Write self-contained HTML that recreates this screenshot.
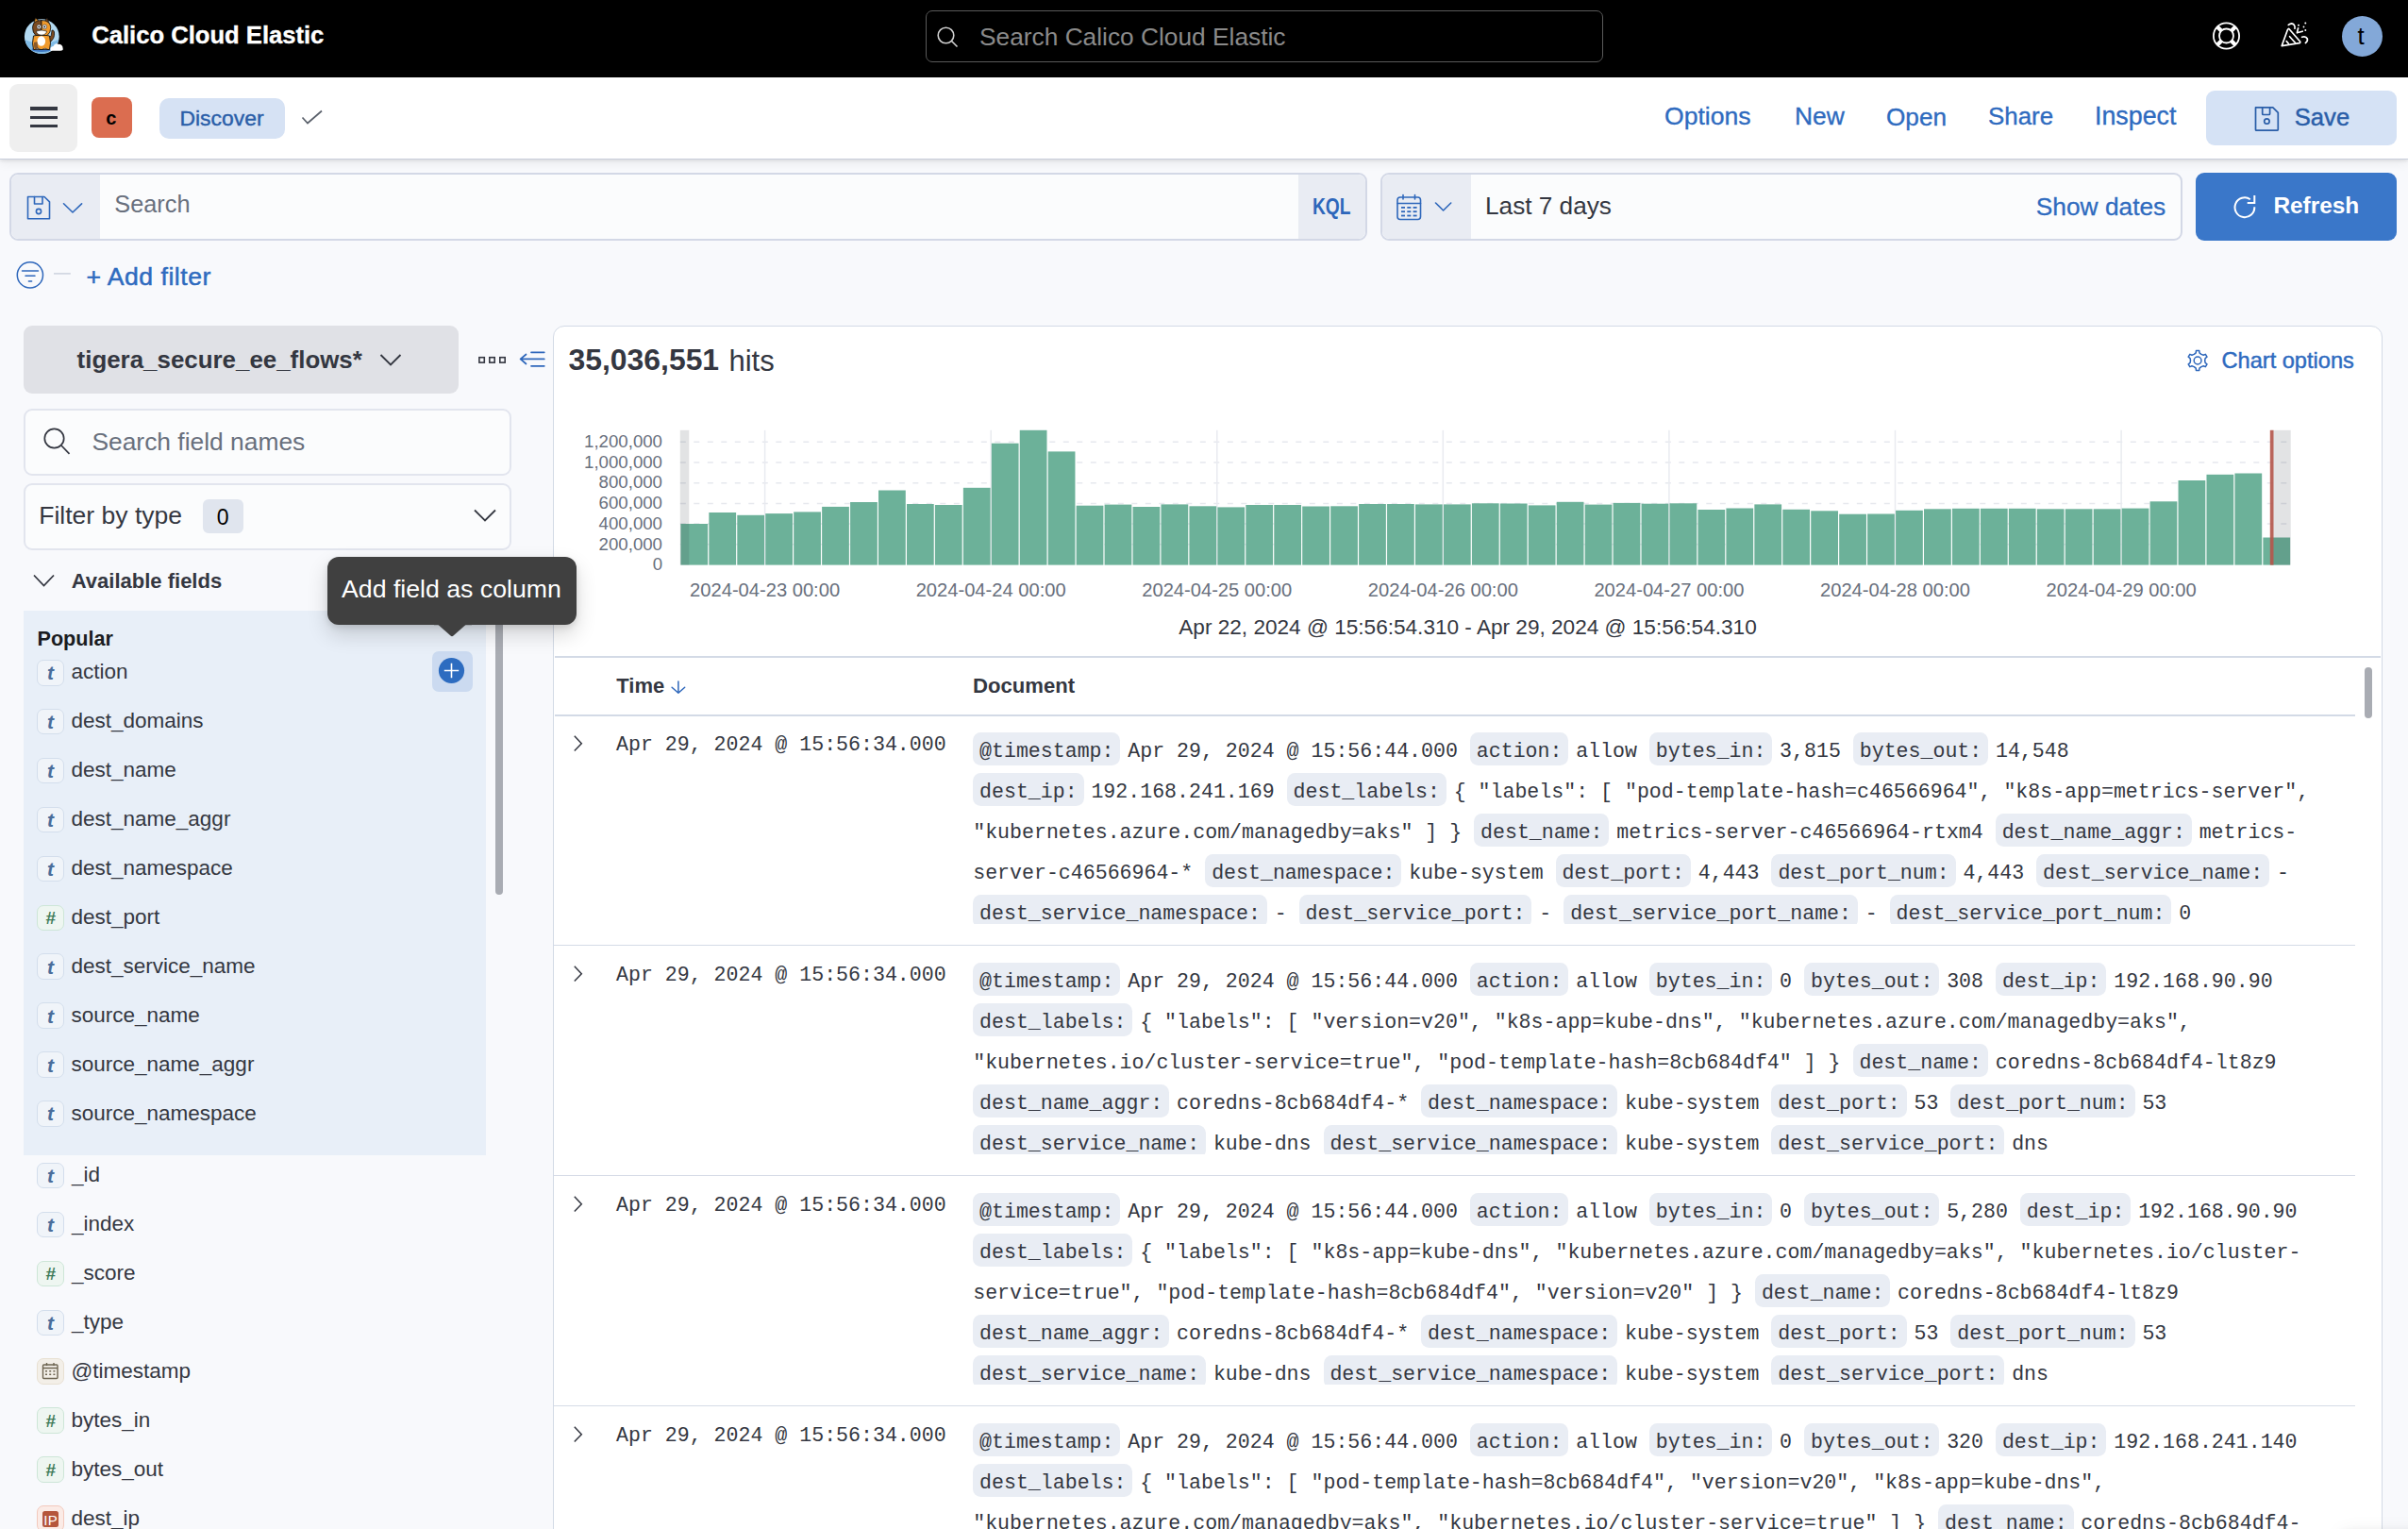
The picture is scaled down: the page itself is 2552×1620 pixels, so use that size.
<!DOCTYPE html><html><head><meta charset="utf-8"><title>Discover</title><style>
html,body{margin:0;padding:0;}
body{width:2552px;height:1620px;overflow:hidden;position:relative;background:#f8f9fc;font-family:"Liberation Sans",sans-serif;}
.r{position:absolute;}
.t{position:absolute;white-space:nowrap;}
.s{font-family:"Liberation Sans",sans-serif;}
.m{font-family:"Liberation Mono",monospace;}
.doc{position:absolute;overflow:hidden;font-family:"Liberation Mono",monospace;font-size:21.58px;color:#343741;width:1480px;}
.ln{height:43px;line-height:43px;white-space:nowrap;}
.k{background:#e9edf4;padding:7.73px 6.9px 3.22px;border-radius:8.5px;margin-right:7.85px;}
.v{margin-right:13px;}
@media (max-width:1400px){html{zoom:.5}}
</style></head><body><div class="r" style="left:0px;top:0px;width:2552.00px;height:82.00px;background:#000;"></div>
<svg class="r" style="left:0;top:0" width="90" height="82" viewBox="0 0 90 82">
<circle cx="44.3" cy="38.7" r="18.4" fill="#b3daf2"/>
<path d="M26.5 42 Q44 50 62 42 Q60 54 44.3 57.1 Q29 55 26.5 42Z" fill="#7fbbe6"/>
<ellipse cx="44" cy="52.5" rx="10.5" ry="2.6" fill="#3f78c2"/>
<path d="M52.5 45 Q58.5 41 57.5 34 Q57 31.5 55 32 Q55.5 38 51 42Z" fill="#7b4a1f" stroke="#111" stroke-width=".8"/>
<path d="M35.5 38 Q33.5 46 35.5 52.5 L52.5 52.5 Q54.5 46 52.5 38 Q44 35 35.5 38Z" fill="#f09a2c" stroke="#111" stroke-width=".9"/>
<path d="M36 45 Q35.5 50 37 52.3 L41 52.3 Q39 48 40 44Z" fill="#8a5a2a"/>
<ellipse cx="43.8" cy="43.5" rx="4.3" ry="5.3" fill="#fff"/>
<path d="M37.5 52.3 Q39.5 50 42.5 52.3 Z M45 52.3 Q48 50 50.5 52.3Z" fill="#fff" stroke="#111" stroke-width=".6"/>
<path d="M35.2 27.5 L37.5 19 L42.5 23.5Z" fill="#f09a2c" stroke="#111" stroke-width=".8"/>
<path d="M46.5 23.5 L50 19.2 L53.2 27.5Z" fill="#7b4a1f" stroke="#111" stroke-width=".8"/>
<path d="M44 21.5 Q35 21.5 34.5 29 Q34.5 35 38 37.5 L44 37.5Z" fill="#7b4a1f" stroke="#111" stroke-width=".8"/>
<path d="M44 21.5 Q53 21.5 53.8 29 Q53.8 35 50 37.5 L44 37.5Z" fill="#f09a2c" stroke="#111" stroke-width=".8"/>
<circle cx="41.3" cy="28.4" r="2.3" fill="#fff" stroke="#111" stroke-width=".5"/><circle cx="47.3" cy="28.4" r="2.3" fill="#fff" stroke="#111" stroke-width=".5"/>
<circle cx="41.3" cy="28.4" r=".9" fill="#111"/><circle cx="47.3" cy="28.4" r=".9" fill="#111"/>
<path d="M38.5 33 Q44 31 49.5 33 Q49 37 44 37.2 Q39 37 38.5 33Z" fill="#fff" stroke="#111" stroke-width=".6"/>
<path d="M53.5 53.8 Q52.5 49.5 56.5 49 Q58 45.3 62 46.8 Q66.5 47 66.6 51 Q67.5 53.8 64 53.8 Z" fill="#fff"/>
</svg>
<div class="t s" style="left:97.30px;top:25.23px;font-size:25.6px;line-height:25.6px;color:#fff;font-weight:700;-webkit-text-stroke:0.35px #fff;">Calico Cloud Elastic</div>
<div class="r" style="left:981px;top:11px;width:718.00px;height:55.00px;border:1.8px solid #5a5a5a;border-radius:7px;box-sizing:border-box;background:#000;"></div>
<svg class="r" style="left:990px;top:26px" width="30" height="26" viewBox="0 0 30 26"><circle cx="12.5" cy="11.5" r="8.3" stroke="#d0d0d0" stroke-width="1.6" fill="none"/><path d="M18.5 17.5 L24.5 23.5" stroke="#d0d0d0" stroke-width="1.6"/></svg>
<div class="t s" style="left:1038.00px;top:25.78px;font-size:26.3px;line-height:26.3px;color:#8a8a8a;">Search Calico Cloud Elastic</div>
<svg class="r" style="left:2340px;top:19px" width="40" height="40" viewBox="0 0 40 40"><g stroke="#fff" stroke-width="1.8" fill="none"><circle cx="19.5" cy="19" r="13.6"/><circle cx="19.5" cy="19" r="7.5"/></g><path d="M9.5 9 L14.5 14 M29.5 9 L24.5 14 M9.5 29 L14.5 24 M29.5 29 L24.5 24" stroke="#fff" stroke-width="4.2"/></svg>
<svg class="r" style="left:2405px;top:15px" width="50" height="45" viewBox="0 0 50 45"><g stroke="#fff" stroke-width="1.7" fill="none" stroke-linejoin="round" stroke-linecap="round"><path d="M13.2 33.6 L19.5 16.3 Q20.2 14.8 21.3 16 L32.6 29 Q33.2 30.2 31.8 30.6 Z"/><path d="M21.6 23.7 L27.4 30.2 M18.2 28.6 L20.4 31.2"/><path d="M20.3 11.4 Q24 8.6 26.3 11.4 Q27.6 13.2 27 15.2"/><path d="M34.6 24.3 Q38.6 22.8 40.3 26 Q41 28.6 38.4 30.5"/><path d="M30.6 14.8 L29.4 19.8 L35.2 18.2"/></g><g fill="#fff"><circle cx="38.3" cy="9.6" r="1"/><circle cx="31" cy="11.8" r="1"/><circle cx="36.5" cy="13.5" r=".9"/><circle cx="38.3" cy="17" r="1"/></g></svg>
<div class="r" style="left:2482px;top:17px;width:43px;height:43px;border-radius:50%;background:#83a8d8;"></div>
<div class="t s" style="left:2498.60px;top:25.43px;font-size:26px;line-height:26px;color:#000;">t</div>
<div class="r" style="left:0px;top:82px;width:2552.00px;height:87.00px;background:#fff;border-bottom:1.5px solid #c9cfdc;box-sizing:border-box;box-shadow:0 2px 3px rgba(0,0,0,.07),0 5px 10px rgba(0,0,0,.05);z-index:2;"></div>
<div class="r" style="left:10px;top:89px;width:72.00px;height:72.00px;background:#efefef;border-radius:9px;z-index:3;"></div>
<div class="r" style="left:32px;top:113.3px;width:29.00px;height:3.40px;background:#343741;z-index:3;"></div>
<div class="r" style="left:32px;top:122.6px;width:29.00px;height:3.40px;background:#343741;z-index:3;"></div>
<div class="r" style="left:32px;top:131.8px;width:29.00px;height:3.40px;background:#343741;z-index:3;"></div>
<div class="r" style="left:97px;top:103px;width:43.00px;height:43.00px;background:#db6d50;border-radius:8px;z-index:3;"></div>
<div class="t s" style="left:112.30px;top:115.25px;font-size:20px;line-height:20px;color:#000;font-weight:700;z-index:3;">c</div>
<div class="r" style="left:169px;top:104px;width:133.00px;height:43.00px;background:#d6e2f4;border-radius:10px;z-index:3;"></div>
<div class="t s" style="left:190.50px;top:113.69px;font-size:22.9px;line-height:22.9px;color:#2a5ea8;z-index:3;-webkit-text-stroke:0.4px #2a5ea8;">Discover</div>
<svg class="r" style="left:316px;top:112px;z-index:3" width="30" height="24" viewBox="0 0 30 24"><path d="M4.5 12.5 L10 18.5 L25 5.5" stroke="#5a606b" stroke-width="1.7" fill="none"/></svg>
<div class="t s" style="left:1764.00px;top:110.38px;font-size:26.6px;line-height:26.6px;color:#2f6bbf;z-index:3;-webkit-text-stroke:0.35px #2f6bbf;">Options</div>
<div class="t s" style="left:1902.00px;top:110.48px;font-size:26.4px;line-height:26.4px;color:#2f6bbf;z-index:3;-webkit-text-stroke:0.35px #2f6bbf;">New</div>
<div class="t s" style="left:1999.00px;top:110.58px;font-size:26.2px;line-height:26.2px;color:#2f6bbf;z-index:3;-webkit-text-stroke:0.35px #2f6bbf;">Open</div>
<div class="t s" style="left:2107.00px;top:110.73px;font-size:25.9px;line-height:25.9px;color:#2f6bbf;z-index:3;-webkit-text-stroke:0.35px #2f6bbf;">Share</div>
<div class="t s" style="left:2220.00px;top:110.28px;font-size:26.8px;line-height:26.8px;color:#2f6bbf;z-index:3;-webkit-text-stroke:0.35px #2f6bbf;">Inspect</div>
<div class="r" style="left:2338px;top:96px;width:202.00px;height:57.60px;background:#d5e2f5;border-radius:9px;z-index:3;"></div>
<svg class="r" style="left:2386px;top:110px;z-index:3" width="32" height="32" viewBox="0 0 32 32"><g stroke="#2a5ea8" stroke-width="1.7" fill="none" stroke-linejoin="round"><path d="M4.5 3.9 L22.8 3.9 L28.3 9.4 L28.3 27.6 Q28.3 28.2 27.6 28.2 L5.2 28.2 Q4.5 28.2 4.5 27.5 Z"/><path d="M11.7 4 L11.7 10.5 Q11.7 11.5 12.7 11.5 L18.6 11.5 Q19.6 11.5 19.6 10.5 L19.6 4"/><circle cx="16.4" cy="18.5" r="2.7"/></g></svg>
<div class="t s" style="left:2431.80px;top:112.13px;font-size:25.6px;line-height:25.6px;color:#2a5ea8;z-index:3;-webkit-text-stroke:0.45px #2a5ea8;">Save</div>
<div class="r" style="left:10px;top:183px;width:1438.50px;height:71.50px;background:#fbfcfd;border:2px solid #d3d8e6;border-radius:9px;box-sizing:border-box;overflow:hidden;"></div>
<div class="r" style="left:12px;top:185px;width:94.00px;height:67.50px;background:#e9ecf3;border-radius:8px 0 0 8px;"></div>
<svg class="r" style="left:24px;top:204px" width="70" height="32" viewBox="0 0 70 32"><g stroke="#2e67bb" stroke-width="1.6" fill="none" stroke-linejoin="round" stroke-linecap="round"><path d="M5.5 4.5 L23 4.5 L28.5 9.8 L28.5 27.8 L5.5 27.8 Z"/><path d="M12.5 4.5 L12.5 12 L21 12 L21 4.5"/><circle cx="17" cy="20" r="2.6"/><path d="M43.5 11.8 L53 21 L62.6 11.8"/></g></svg>
<div class="t s" style="left:121.30px;top:204.28px;font-size:25.3px;line-height:25.3px;color:#69707d;">Search</div>
<div class="r" style="left:1376px;top:185px;width:70.50px;height:67.50px;background:#e9ecf3;border-radius:0 8px 8px 0;"></div>
<div class="t s" style="left:1391.40px;top:206.74px;font-size:24px;line-height:24px;color:#2e67bb;font-weight:700;transform:scaleX(0.8);transform-origin:0 0;">KQL</div>
<div class="r" style="left:1463.4px;top:183px;width:849.20px;height:71.50px;background:#fbfcfd;border:2px solid #d3d8e6;border-radius:9px;box-sizing:border-box;"></div>
<div class="r" style="left:1465.4px;top:185px;width:93.60px;height:67.50px;background:#e9ecf3;border-radius:8px 0 0 8px;"></div>
<svg class="r" style="left:1476px;top:202px" width="70" height="36" viewBox="0 0 70 36"><g stroke="#2e67bb" stroke-width="1.6" fill="none" stroke-linecap="round" stroke-linejoin="round"><rect x="5" y="7" width="24.5" height="23.5" rx="3"/><path d="M5 13.5 L29.5 13.5 M11 4.5 L11 9 M23.5 4.5 L23.5 9"/><path d="M45.5 13 L53.6 21 L61.7 13"/></g><g fill="#2e67bb"><rect x="9" y="17" width="4" height="1.8"/><rect x="15.3" y="17" width="4" height="1.8"/><rect x="21.6" y="17" width="4" height="1.8"/><rect x="9" y="21.3" width="4" height="1.8"/><rect x="15.3" y="21.3" width="4" height="1.8"/><rect x="21.6" y="21.3" width="4" height="1.8"/><rect x="9" y="25.6" width="4" height="1.8"/><rect x="15.3" y="25.6" width="4" height="1.8"/><rect x="21.6" y="25.6" width="4" height="1.8"/></g></svg>
<div class="t s" style="left:1574.00px;top:205.43px;font-size:26.2px;line-height:26.2px;color:#343741;">Last 7 days</div>
<div class="t s" style="left:2157.80px;top:205.78px;font-size:26.3px;line-height:26.3px;color:#2f6bbf;-webkit-text-stroke:0.3px #2f6bbf;">Show dates</div>
<div class="r" style="left:2327px;top:183px;width:213.00px;height:71.50px;background:#3a77c9;border-radius:9px;"></div>
<svg class="r" style="left:2360px;top:200px" width="40" height="40" viewBox="0 0 40 40"><g stroke="#fff" stroke-width="2" fill="none"><path d="M29.3 19.2 A10.4 10.4 0 1 1 24.8 11.2"/><path d="M29.3 7.1 L29.3 15 L21.7 15"/></g></svg>
<div class="t s" style="left:2409.40px;top:205.93px;font-size:24.4px;line-height:24.4px;color:#fff;font-weight:700;">Refresh</div>
<svg class="r" style="left:14px;top:273px" width="70" height="36" viewBox="0 0 70 36"><g stroke="#2e67bb" stroke-width="1.5" fill="none" stroke-linecap="round"><circle cx="17.9" cy="18.4" r="13.6"/><path d="M9.5 13.9 L26.5 13.9 M13 19.3 L23 19.3 M16.4 24.9 L19.6 24.9"/></g><path d="M43 16.9 L60.8 16.9" stroke="#d3d8e2" stroke-width="1.8"/></svg>
<div class="t s" style="left:91.40px;top:280.43px;font-size:26.6px;line-height:26.6px;color:#2f6bbf;letter-spacing:0.5px;-webkit-text-stroke:0.5px #2f6bbf;">+ Add filter</div>
<div class="r" style="left:25px;top:345px;width:461.00px;height:72.00px;background:#e0e1e6;border-radius:9px;"></div>
<div class="t s" style="left:81.60px;top:368.58px;font-size:25.9px;line-height:25.9px;color:#343741;font-weight:700;">tigera_secure_ee_flows*</div>
<svg class="r" style="left:398px;top:368px" width="32" height="26" viewBox="0 0 32 26"><path d="M5.5 8 L16 18.5 L26.5 8" stroke="#343741" stroke-width="1.9" fill="none"/></svg>
<svg class="r" style="left:500px;top:366px" width="84" height="30" viewBox="0 0 84 30"><g stroke="#343741" stroke-width="1.6" fill="none"><rect x="7.9" y="12.7" width="5.4" height="5.4"/><rect x="18.8" y="12.7" width="5.4" height="5.4"/><rect x="29.8" y="12.7" width="5.4" height="5.4"/></g><g stroke="#2e67bb" stroke-width="1.7" fill="none" stroke-linecap="round" stroke-linejoin="round"><path d="M57.5 9.5 L51.6 14.4 L57.5 19.5 M51.6 14.4 L76.8 14.4 M63 7.3 L76.8 7.3 M63 21.8 L76.8 21.8"/></g></svg>
<div class="r" style="left:25px;top:433px;width:517.00px;height:71.20px;background:#fbfcfd;border:2px solid #e2e5ee;border-radius:9px;box-sizing:border-box;"></div>
<svg class="r" style="left:42px;top:450px" width="38" height="36" viewBox="0 0 38 36"><g stroke="#343741" stroke-width="1.7" fill="none"><circle cx="15.5" cy="14.5" r="10.2"/><path d="M23 22 L31.5 30.8"/></g></svg>
<div class="t s" style="left:97.40px;top:454.83px;font-size:26.4px;line-height:26.4px;color:#69707d;">Search field names</div>
<div class="r" style="left:25px;top:512.2px;width:517.00px;height:70.80px;background:#fbfcfd;border:2px solid #e2e5ee;border-radius:9px;box-sizing:border-box;"></div>
<div class="t s" style="left:41.30px;top:532.68px;font-size:26.5px;line-height:26.5px;color:#343741;">Filter by type</div>
<div class="r" style="left:215px;top:529px;width:42.60px;height:35.70px;background:#e0e5ee;border-radius:6px;"></div>
<div class="t s" style="left:229.80px;top:536.74px;font-size:23px;line-height:23px;color:#000;">0</div>
<svg class="r" style="left:498px;top:534px" width="32" height="26" viewBox="0 0 32 26"><path d="M5 6.5 L16 17.5 L27 6.5" stroke="#343741" stroke-width="1.8" fill="none"/></svg>
<svg class="r" style="left:30px;top:600px" width="32" height="30" viewBox="0 0 32 30"><path d="M6 9.5 L16.5 20.5 L27 9.5" stroke="#343741" stroke-width="1.8" fill="none"/></svg>
<div class="t s" style="left:75.80px;top:604.64px;font-size:22px;line-height:22px;color:#343741;font-weight:700;">Available fields</div>
<div class="r" style="left:25px;top:647px;width:490.00px;height:576.60px;background:#e8eff8;"></div>
<div class="t s" style="left:39.50px;top:665.64px;font-size:21.6px;line-height:21.6px;color:#1a1c21;font-weight:700;">Popular</div>
<div class="r" style="left:39.3px;top:699.0px;width:28.30px;height:27.60px;background:#f0f4f9;border:1.6px solid #d3deec;border-radius:7px;box-sizing:border-box;"></div>
<div class="t s" style="left:39.3px;width:28.3px;text-align:center;top:702.30px;font-size:21px;line-height:21px;color:#4a6e9b;font-weight:700;font-style:italic;">t</div>
<div class="t s" style="left:75.50px;top:701.49px;font-size:22.5px;line-height:22.5px;color:#343741;">action</div>
<div class="r" style="left:39.3px;top:750.9px;width:28.30px;height:27.60px;background:#f0f4f9;border:1.6px solid #d3deec;border-radius:7px;box-sizing:border-box;"></div>
<div class="t s" style="left:39.3px;width:28.3px;text-align:center;top:754.20px;font-size:21px;line-height:21px;color:#4a6e9b;font-weight:700;font-style:italic;">t</div>
<div class="t s" style="left:75.50px;top:753.39px;font-size:22.5px;line-height:22.5px;color:#343741;">dest_domains</div>
<div class="r" style="left:39.3px;top:802.8px;width:28.30px;height:27.60px;background:#f0f4f9;border:1.6px solid #d3deec;border-radius:7px;box-sizing:border-box;"></div>
<div class="t s" style="left:39.3px;width:28.3px;text-align:center;top:806.10px;font-size:21px;line-height:21px;color:#4a6e9b;font-weight:700;font-style:italic;">t</div>
<div class="t s" style="left:75.50px;top:805.29px;font-size:22.5px;line-height:22.5px;color:#343741;">dest_name</div>
<div class="r" style="left:39.3px;top:854.7px;width:28.30px;height:27.60px;background:#f0f4f9;border:1.6px solid #d3deec;border-radius:7px;box-sizing:border-box;"></div>
<div class="t s" style="left:39.3px;width:28.3px;text-align:center;top:858.00px;font-size:21px;line-height:21px;color:#4a6e9b;font-weight:700;font-style:italic;">t</div>
<div class="t s" style="left:75.50px;top:857.19px;font-size:22.5px;line-height:22.5px;color:#343741;">dest_name_aggr</div>
<div class="r" style="left:39.3px;top:906.6px;width:28.30px;height:27.60px;background:#f0f4f9;border:1.6px solid #d3deec;border-radius:7px;box-sizing:border-box;"></div>
<div class="t s" style="left:39.3px;width:28.3px;text-align:center;top:909.90px;font-size:21px;line-height:21px;color:#4a6e9b;font-weight:700;font-style:italic;">t</div>
<div class="t s" style="left:75.50px;top:909.09px;font-size:22.5px;line-height:22.5px;color:#343741;">dest_namespace</div>
<div class="r" style="left:39.3px;top:958.5px;width:28.30px;height:27.60px;background:#eef6f1;border:1.6px solid #cde6d7;border-radius:7px;box-sizing:border-box;"></div>
<div class="t s" style="left:39.3px;width:28.3px;text-align:center;top:962.80px;font-size:19px;line-height:19px;color:#3d7a58;font-weight:700;font-style:italic;">#</div>
<div class="t s" style="left:75.50px;top:960.99px;font-size:22.5px;line-height:22.5px;color:#343741;">dest_port</div>
<div class="r" style="left:39.3px;top:1010.4px;width:28.30px;height:27.60px;background:#f0f4f9;border:1.6px solid #d3deec;border-radius:7px;box-sizing:border-box;"></div>
<div class="t s" style="left:39.3px;width:28.3px;text-align:center;top:1013.70px;font-size:21px;line-height:21px;color:#4a6e9b;font-weight:700;font-style:italic;">t</div>
<div class="t s" style="left:75.50px;top:1012.89px;font-size:22.5px;line-height:22.5px;color:#343741;">dest_service_name</div>
<div class="r" style="left:39.3px;top:1062.3px;width:28.30px;height:27.60px;background:#f0f4f9;border:1.6px solid #d3deec;border-radius:7px;box-sizing:border-box;"></div>
<div class="t s" style="left:39.3px;width:28.3px;text-align:center;top:1065.60px;font-size:21px;line-height:21px;color:#4a6e9b;font-weight:700;font-style:italic;">t</div>
<div class="t s" style="left:75.50px;top:1064.79px;font-size:22.5px;line-height:22.5px;color:#343741;">source_name</div>
<div class="r" style="left:39.3px;top:1114.2px;width:28.30px;height:27.60px;background:#f0f4f9;border:1.6px solid #d3deec;border-radius:7px;box-sizing:border-box;"></div>
<div class="t s" style="left:39.3px;width:28.3px;text-align:center;top:1117.50px;font-size:21px;line-height:21px;color:#4a6e9b;font-weight:700;font-style:italic;">t</div>
<div class="t s" style="left:75.50px;top:1116.69px;font-size:22.5px;line-height:22.5px;color:#343741;">source_name_aggr</div>
<div class="r" style="left:39.3px;top:1166.1px;width:28.30px;height:27.60px;background:#f0f4f9;border:1.6px solid #d3deec;border-radius:7px;box-sizing:border-box;"></div>
<div class="t s" style="left:39.3px;width:28.3px;text-align:center;top:1169.40px;font-size:21px;line-height:21px;color:#4a6e9b;font-weight:700;font-style:italic;">t</div>
<div class="t s" style="left:75.50px;top:1168.59px;font-size:22.5px;line-height:22.5px;color:#343741;">source_namespace</div>
<div class="r" style="left:39.3px;top:1231.8px;width:28.30px;height:27.60px;background:#f0f4f9;border:1.6px solid #d3deec;border-radius:7px;box-sizing:border-box;"></div>
<div class="t s" style="left:39.3px;width:28.3px;text-align:center;top:1235.10px;font-size:21px;line-height:21px;color:#4a6e9b;font-weight:700;font-style:italic;">t</div>
<div class="t s" style="left:76.00px;top:1234.29px;font-size:22.5px;line-height:22.5px;color:#343741;">_id</div>
<div class="r" style="left:39.3px;top:1283.7px;width:28.30px;height:27.60px;background:#f0f4f9;border:1.6px solid #d3deec;border-radius:7px;box-sizing:border-box;"></div>
<div class="t s" style="left:39.3px;width:28.3px;text-align:center;top:1287.00px;font-size:21px;line-height:21px;color:#4a6e9b;font-weight:700;font-style:italic;">t</div>
<div class="t s" style="left:76.00px;top:1286.19px;font-size:22.5px;line-height:22.5px;color:#343741;">_index</div>
<div class="r" style="left:39.3px;top:1335.6px;width:28.30px;height:27.60px;background:#eef6f1;border:1.6px solid #cde6d7;border-radius:7px;box-sizing:border-box;"></div>
<div class="t s" style="left:39.3px;width:28.3px;text-align:center;top:1339.90px;font-size:19px;line-height:19px;color:#3d7a58;font-weight:700;font-style:italic;">#</div>
<div class="t s" style="left:76.00px;top:1338.09px;font-size:22.5px;line-height:22.5px;color:#343741;">_score</div>
<div class="r" style="left:39.3px;top:1387.5px;width:28.30px;height:27.60px;background:#f0f4f9;border:1.6px solid #d3deec;border-radius:7px;box-sizing:border-box;"></div>
<div class="t s" style="left:39.3px;width:28.3px;text-align:center;top:1390.80px;font-size:21px;line-height:21px;color:#4a6e9b;font-weight:700;font-style:italic;">t</div>
<div class="t s" style="left:76.00px;top:1389.99px;font-size:22.5px;line-height:22.5px;color:#343741;">_type</div>
<div class="r" style="left:39.3px;top:1439.3999999999999px;width:28.30px;height:27.60px;background:#f3efe8;border:1.6px solid #e8e0d2;border-radius:7px;box-sizing:border-box;"></div>
<svg class="r" style="left:39.3px;top:1439.3999999999999px" width="28.3" height="27.6" viewBox="0 0 28.3 27.6"><g stroke="#6e6552" stroke-width="1.4" fill="none"><rect x="6.5" y="7" width="15.5" height="14.5" rx="1"/><path d="M6.5 10.5 L22 10.5 M10.5 5 L10.5 8 M18 5 L18 8"/></g><g fill="#6e6552"><rect x="9" y="13" width="2" height="1.5"/><rect x="13.2" y="13" width="2" height="1.5"/><rect x="17.4" y="13" width="2" height="1.5"/><rect x="9" y="16.5" width="2" height="1.5"/><rect x="13.2" y="16.5" width="2" height="1.5"/><rect x="17.4" y="16.5" width="2" height="1.5"/></g></svg>
<div class="t s" style="left:75.50px;top:1441.89px;font-size:22.5px;line-height:22.5px;color:#343741;">@timestamp</div>
<div class="r" style="left:39.3px;top:1491.3px;width:28.30px;height:27.60px;background:#eef6f1;border:1.6px solid #cde6d7;border-radius:7px;box-sizing:border-box;"></div>
<div class="t s" style="left:39.3px;width:28.3px;text-align:center;top:1495.60px;font-size:19px;line-height:19px;color:#3d7a58;font-weight:700;font-style:italic;">#</div>
<div class="t s" style="left:75.50px;top:1493.79px;font-size:22.5px;line-height:22.5px;color:#343741;">bytes_in</div>
<div class="r" style="left:39.3px;top:1543.1999999999998px;width:28.30px;height:27.60px;background:#eef6f1;border:1.6px solid #cde6d7;border-radius:7px;box-sizing:border-box;"></div>
<div class="t s" style="left:39.3px;width:28.3px;text-align:center;top:1547.50px;font-size:19px;line-height:19px;color:#3d7a58;font-weight:700;font-style:italic;">#</div>
<div class="t s" style="left:75.50px;top:1545.69px;font-size:22.5px;line-height:22.5px;color:#343741;">bytes_out</div>
<div class="r" style="left:39.3px;top:1595.1px;width:28.30px;height:27.60px;background:#fbebe6;border:1.7px solid #f3c9bc;border-radius:7px;box-sizing:border-box;"></div>
<div class="r" style="left:45px;top:1601.3999999999999px;width:17.40px;height:17.00px;background:#b5563c;border-radius:2.5px;"></div>
<div class="t s" style="left:45px;width:17.4px;text-align:center;top:1602.70px;font-size:15px;line-height:15px;color:#fff;font-weight:400;letter-spacing:0.3px">IP</div>
<div class="t s" style="left:75.50px;top:1597.59px;font-size:22.5px;line-height:22.5px;color:#343741;">dest_ip</div>
<div class="r" style="left:525px;top:640px;width:8.00px;height:307.50px;background:#a9acb3;border-radius:4px;"></div>
<div class="r" style="left:458px;top:690px;width:42.60px;height:43.00px;background:#cbdaf0;border-radius:7px;"></div>
<svg class="r" style="left:462px;top:694px" width="34" height="34" viewBox="0 0 34 34"><circle cx="16.5" cy="16.5" r="13.6" fill="#2d6cc0"/><path d="M16.5 8.8 L16.5 24.2 M8.8 16.5 L24.2 16.5" stroke="#fff" stroke-width="1.6"/></svg>
<div class="r" style="left:347px;top:590px;width:264.00px;height:72.00px;background:#404040;border-radius:12px;box-shadow:0 10px 22px rgba(0,0,0,.16),0 3px 6px rgba(0,0,0,.1);z-index:5;"></div>
<svg class="r" style="left:460px;top:660px;z-index:5" width="40" height="18" viewBox="0 0 40 18"><path d="M4.5 2 L33.5 2 L20.5 13.6 Q19 14.8 17.5 13.6 Z" fill="#404040"/><rect x="0" y="0" width="40" height="2.2" fill="#404040"/></svg>
<div class="t s" style="left:362.00px;top:611.33px;font-size:26.7px;line-height:26.7px;color:#fff;z-index:6;">Add field as column</div>
<div class="r" style="left:585.8px;top:344.5px;width:1939.40px;height:1355.50px;background:#fff;border:1.5px solid #d3dae6;border-radius:12px;box-sizing:border-box;"></div>
<div class="t s" style="left:602.50px;top:366.26px;font-size:31.9px;line-height:31.9px;color:#343741;font-weight:700;">35,036,551</div>
<div class="t s" style="left:772.40px;top:366.72px;font-size:31px;line-height:31px;color:#343741;">hits</div>
<svg class="r" style="left:2300px;top:360px" width="60" height="44" viewBox="0 0 60 44"><g stroke="#2e67bb" stroke-width="1.5" fill="none" stroke-linejoin="round"><path d="M25.30 15.42 L27.21 13.82 L27.44 11.53 L30.76 11.53 L30.99 13.82 L32.90 15.42 L35.24 16.27 L37.34 15.33 L39.00 18.20 L37.13 19.54 L36.70 22.00 L37.13 24.46 L39.00 25.80 L37.34 28.67 L35.24 27.73 L32.90 28.58 L30.99 30.18 L30.76 32.47 L27.44 32.47 L27.21 30.18 L25.30 28.58 L22.96 27.73 L20.86 28.67 L19.20 25.80 L21.07 24.46 L21.50 22.00 L21.07 19.54 L19.20 18.20 L20.86 15.33 L22.96 16.27Z"/><circle cx="29.10" cy="22.00" r="3.9"/></g></svg>
<div class="t s" style="left:2354.50px;top:371.14px;font-size:23.6px;line-height:23.6px;color:#2f6bbf;-webkit-text-stroke:0.45px #2f6bbf;">Chart options</div>
<svg class="r" style="left:0;top:0" width="2552" height="700" viewBox="0 0 2552 700"><line x1="720.8" y1="468.3" x2="2428" y2="468.3" stroke="#e6e8ee" stroke-width="1.5" stroke-dasharray="6 8.5"/><line x1="720.8" y1="490.0" x2="2428" y2="490.0" stroke="#e6e8ee" stroke-width="1.5" stroke-dasharray="6 8.5"/><line x1="720.8" y1="511.7" x2="2428" y2="511.7" stroke="#e6e8ee" stroke-width="1.5" stroke-dasharray="6 8.5"/><line x1="720.8" y1="533.4" x2="2428" y2="533.4" stroke="#e6e8ee" stroke-width="1.5" stroke-dasharray="6 8.5"/><line x1="720.8" y1="555.1" x2="2428" y2="555.1" stroke="#e6e8ee" stroke-width="1.5" stroke-dasharray="6 8.5"/><line x1="720.8" y1="576.8" x2="2428" y2="576.8" stroke="#e6e8ee" stroke-width="1.5" stroke-dasharray="6 8.5"/><line x1="810.6" y1="455.8" x2="810.6" y2="598.6" stroke="#e9ebf0" stroke-width="1.5"/><line x1="1050.2" y1="455.8" x2="1050.2" y2="598.6" stroke="#e9ebf0" stroke-width="1.5"/><line x1="1289.8" y1="455.8" x2="1289.8" y2="598.6" stroke="#e9ebf0" stroke-width="1.5"/><line x1="1529.3" y1="455.8" x2="1529.3" y2="598.6" stroke="#e9ebf0" stroke-width="1.5"/><line x1="1768.9" y1="455.8" x2="1768.9" y2="598.6" stroke="#e9ebf0" stroke-width="1.5"/><line x1="2008.5" y1="455.8" x2="2008.5" y2="598.6" stroke="#e9ebf0" stroke-width="1.5"/><line x1="2248.1" y1="455.8" x2="2248.1" y2="598.6" stroke="#e9ebf0" stroke-width="1.5"/><rect x="721.40" y="555" width="28.75" height="43.60" fill="#6cb199"/><rect x="751.35" y="543" width="28.75" height="55.60" fill="#6cb199"/><rect x="781.29" y="545.8" width="28.75" height="52.80" fill="#6cb199"/><rect x="811.24" y="544.1" width="28.75" height="54.50" fill="#6cb199"/><rect x="841.18" y="542.4" width="28.75" height="56.20" fill="#6cb199"/><rect x="871.13" y="536.9" width="28.75" height="61.70" fill="#6cb199"/><rect x="901.08" y="532" width="28.75" height="66.60" fill="#6cb199"/><rect x="931.02" y="519.5" width="28.75" height="79.10" fill="#6cb199"/><rect x="960.97" y="534" width="28.75" height="64.60" fill="#6cb199"/><rect x="990.91" y="535" width="28.75" height="63.60" fill="#6cb199"/><rect x="1020.86" y="516.8" width="28.75" height="81.80" fill="#6cb199"/><rect x="1050.81" y="469.7" width="28.75" height="128.90" fill="#6cb199"/><rect x="1080.75" y="455.8" width="28.75" height="142.80" fill="#6cb199"/><rect x="1110.70" y="478.4" width="28.75" height="120.20" fill="#6cb199"/><rect x="1140.64" y="535.7" width="28.75" height="62.90" fill="#6cb199"/><rect x="1170.59" y="534.6" width="28.75" height="64.00" fill="#6cb199"/><rect x="1200.54" y="537" width="28.75" height="61.60" fill="#6cb199"/><rect x="1230.48" y="534.4" width="28.75" height="64.20" fill="#6cb199"/><rect x="1260.43" y="536.3" width="28.75" height="62.30" fill="#6cb199"/><rect x="1290.37" y="537.4" width="28.75" height="61.20" fill="#6cb199"/><rect x="1320.32" y="535" width="28.75" height="63.60" fill="#6cb199"/><rect x="1350.27" y="535" width="28.75" height="63.60" fill="#6cb199"/><rect x="1380.21" y="536.5" width="28.75" height="62.10" fill="#6cb199"/><rect x="1410.16" y="536.3" width="28.75" height="62.30" fill="#6cb199"/><rect x="1440.10" y="534" width="28.75" height="64.60" fill="#6cb199"/><rect x="1470.05" y="534" width="28.75" height="64.60" fill="#6cb199"/><rect x="1500.00" y="534.4" width="28.75" height="64.20" fill="#6cb199"/><rect x="1529.94" y="534.4" width="28.75" height="64.20" fill="#6cb199"/><rect x="1559.89" y="533.3" width="28.75" height="65.30" fill="#6cb199"/><rect x="1589.83" y="533.5" width="28.75" height="65.10" fill="#6cb199"/><rect x="1619.78" y="535.4" width="28.75" height="63.20" fill="#6cb199"/><rect x="1649.73" y="531.8" width="28.75" height="66.80" fill="#6cb199"/><rect x="1679.67" y="534.6" width="28.75" height="64.00" fill="#6cb199"/><rect x="1709.62" y="532.9" width="28.75" height="65.70" fill="#6cb199"/><rect x="1739.56" y="533.7" width="28.75" height="64.90" fill="#6cb199"/><rect x="1769.51" y="533.3" width="28.75" height="65.30" fill="#6cb199"/><rect x="1799.46" y="540" width="28.75" height="58.60" fill="#6cb199"/><rect x="1829.40" y="538.5" width="28.75" height="60.10" fill="#6cb199"/><rect x="1859.35" y="534.4" width="28.75" height="64.20" fill="#6cb199"/><rect x="1889.29" y="539.8" width="28.75" height="58.80" fill="#6cb199"/><rect x="1919.24" y="541.3" width="28.75" height="57.30" fill="#6cb199"/><rect x="1949.19" y="544.7" width="28.75" height="53.90" fill="#6cb199"/><rect x="1979.13" y="544.5" width="28.75" height="54.10" fill="#6cb199"/><rect x="2009.08" y="540.8" width="28.75" height="57.80" fill="#6cb199"/><rect x="2039.02" y="539.3" width="28.75" height="59.30" fill="#6cb199"/><rect x="2068.97" y="538.8" width="28.75" height="59.80" fill="#6cb199"/><rect x="2098.92" y="538.8" width="28.75" height="59.80" fill="#6cb199"/><rect x="2128.86" y="538.8" width="28.75" height="59.80" fill="#6cb199"/><rect x="2158.81" y="539.3" width="28.75" height="59.30" fill="#6cb199"/><rect x="2188.75" y="539.3" width="28.75" height="59.30" fill="#6cb199"/><rect x="2218.70" y="539.3" width="28.75" height="59.30" fill="#6cb199"/><rect x="2248.65" y="538.6" width="28.75" height="60.00" fill="#6cb199"/><rect x="2278.59" y="531.3" width="28.75" height="67.30" fill="#6cb199"/><rect x="2308.54" y="509" width="28.75" height="89.60" fill="#6cb199"/><rect x="2338.48" y="502.8" width="28.75" height="95.80" fill="#6cb199"/><rect x="2368.43" y="501.5" width="28.75" height="97.10" fill="#6cb199"/><rect x="2398.38" y="569.5" width="28.75" height="29.10" fill="#6cb199"/><rect x="720.8" y="455.8" width="9.5" height="142.8" fill="#343741" fill-opacity="0.14"/><rect x="2407.2" y="455.8" width="20.5" height="142.8" fill="#343741" fill-opacity="0.14"/><rect x="2405.8" y="455.8" width="3.7" height="142.8" fill="#b5574b" fill-opacity="0.9"/></svg>
<div class="t s" style="left:500px;width:202px;text-align:right;top:458.90px;font-size:18.65px;line-height:18.65px;color:#69707d;">1,200,000</div>
<div class="t s" style="left:500px;width:202px;text-align:right;top:480.62px;font-size:18.65px;line-height:18.65px;color:#69707d;">1,000,000</div>
<div class="t s" style="left:500px;width:202px;text-align:right;top:502.34px;font-size:18.65px;line-height:18.65px;color:#69707d;">800,000</div>
<div class="t s" style="left:500px;width:202px;text-align:right;top:524.06px;font-size:18.65px;line-height:18.65px;color:#69707d;">600,000</div>
<div class="t s" style="left:500px;width:202px;text-align:right;top:545.78px;font-size:18.65px;line-height:18.65px;color:#69707d;">400,000</div>
<div class="t s" style="left:500px;width:202px;text-align:right;top:567.50px;font-size:18.65px;line-height:18.65px;color:#69707d;">200,000</div>
<div class="t s" style="left:500px;width:202px;text-align:right;top:589.22px;font-size:18.65px;line-height:18.65px;color:#69707d;">0</div>
<div class="t s" style="left:660.60px;width:300px;text-align:center;top:615.40px;font-size:20.15px;line-height:20.15px;color:#69707d;">2024-04-23 00:00</div>
<div class="t s" style="left:900.18px;width:300px;text-align:center;top:615.40px;font-size:20.15px;line-height:20.15px;color:#69707d;">2024-04-24 00:00</div>
<div class="t s" style="left:1139.76px;width:300px;text-align:center;top:615.40px;font-size:20.15px;line-height:20.15px;color:#69707d;">2024-04-25 00:00</div>
<div class="t s" style="left:1379.34px;width:300px;text-align:center;top:615.40px;font-size:20.15px;line-height:20.15px;color:#69707d;">2024-04-26 00:00</div>
<div class="t s" style="left:1618.92px;width:300px;text-align:center;top:615.40px;font-size:20.15px;line-height:20.15px;color:#69707d;">2024-04-27 00:00</div>
<div class="t s" style="left:1858.50px;width:300px;text-align:center;top:615.40px;font-size:20.15px;line-height:20.15px;color:#69707d;">2024-04-28 00:00</div>
<div class="t s" style="left:2098.08px;width:300px;text-align:center;top:615.40px;font-size:20.15px;line-height:20.15px;color:#69707d;">2024-04-29 00:00</div>
<div class="t s" style="left:1155.5px;width:800px;text-align:center;top:653.90px;font-size:22.6px;line-height:22.6px;color:#343741;">Apr 22, 2024 @ 15:56:54.310 - Apr 29, 2024 @ 15:56:54.310</div>
<div class="r" style="left:588px;top:695px;width:1935.00px;height:1.50px;background:#d3dae6;"></div>
<div class="t s" style="left:653.30px;top:716.44px;font-size:22px;line-height:22px;color:#343741;font-weight:700;">Time</div>
<svg class="r" style="left:700px;top:710px" width="40" height="35" viewBox="0 0 40 35"><g stroke="#2e67bb" stroke-width="1.5" fill="none" stroke-linecap="round" stroke-linejoin="round"><path d="M18.9 12 L18.9 24.3 M12.1 18.3 L18.9 24.3 L25.7 18.3"/></g></svg>
<div class="t s" style="left:1031.00px;top:716.39px;font-size:22.1px;line-height:22.1px;color:#343741;font-weight:700;">Document</div>
<div class="r" style="left:588px;top:757px;width:1908.00px;height:1.50px;background:#d3dae6;"></div>
<div class="r" style="left:2505.8px;top:706.8px;width:8.40px;height:54.70px;background:#a9acb3;border-radius:4px;"></div>
<svg class="r" style="left:600px;top:775.20px" width="26" height="26" viewBox="0 0 26 26"><path d="M8.8 4.8 L16.3 12.7 L8.8 20.4" stroke="#343741" stroke-width="1.5" fill="none"/></svg>
<div class="t m" style="left:653px;top:779.27px;font-size:21.58px;line-height:21.58px;color:#343741;">Apr 29, 2024 @ 15:56:34.000</div>
<div class="doc" style="left:1031.2px;top:774.70px;height:204.05px;"><div class="ln"><span class="k">@timestamp:</span><span class="v">Apr 29, 2024 @ 15:56:44.000</span><span class="k">action:</span><span class="v">allow</span><span class="k">bytes_in:</span><span class="v">3,815</span><span class="k">bytes_out:</span><span class="v">14,548</span></div><div class="ln"><span class="k">dest_ip:</span><span class="v">192.168.241.169</span><span class="k">dest_labels:</span><span class="v">{ &quot;labels&quot;: [ &quot;pod-template-hash=c46566964&quot;, &quot;k8s-app=metrics-server&quot;,</span></div><div class="ln"><span class="v">&quot;kubernetes.azure.com/managedby=aks&quot; ] }</span><span class="k">dest_name:</span><span class="v">metrics-server-c46566964-rtxm4</span><span class="k">dest_name_aggr:</span><span class="v">metrics-</span></div><div class="ln"><span class="v">server-c46566964-*</span><span class="k">dest_namespace:</span><span class="v">kube-system</span><span class="k">dest_port:</span><span class="v">4,443</span><span class="k">dest_port_num:</span><span class="v">4,443</span><span class="k">dest_service_name:</span><span class="v">-</span></div><div class="ln"><span class="k">dest_service_namespace:</span><span class="v">-</span><span class="k">dest_service_port:</span><span class="v">-</span><span class="k">dest_service_port_name:</span><span class="v">-</span><span class="k">dest_service_port_num:</span><span class="v">0</span></div></div>
<div class="r" style="left:586.5px;top:1000.77px;width:1909.50px;height:1.20px;background:#d5dbe6;"></div>
<svg class="r" style="left:600px;top:1019.27px" width="26" height="26" viewBox="0 0 26 26"><path d="M8.8 4.8 L16.3 12.7 L8.8 20.4" stroke="#343741" stroke-width="1.5" fill="none"/></svg>
<div class="t m" style="left:653px;top:1023.34px;font-size:21.58px;line-height:21.58px;color:#343741;">Apr 29, 2024 @ 15:56:34.000</div>
<div class="doc" style="left:1031.2px;top:1018.77px;height:204.05px;"><div class="ln"><span class="k">@timestamp:</span><span class="v">Apr 29, 2024 @ 15:56:44.000</span><span class="k">action:</span><span class="v">allow</span><span class="k">bytes_in:</span><span class="v">0</span><span class="k">bytes_out:</span><span class="v">308</span><span class="k">dest_ip:</span><span class="v">192.168.90.90</span></div><div class="ln"><span class="k">dest_labels:</span><span class="v">{ &quot;labels&quot;: [ &quot;version=v20&quot;, &quot;k8s-app=kube-dns&quot;, &quot;kubernetes.azure.com/managedby=aks&quot;,</span></div><div class="ln"><span class="v">&quot;kubernetes.io/cluster-service=true&quot;, &quot;pod-template-hash=8cb684df4&quot; ] }</span><span class="k">dest_name:</span><span class="v">coredns-8cb684df4-lt8z9</span></div><div class="ln"><span class="k">dest_name_aggr:</span><span class="v">coredns-8cb684df4-*</span><span class="k">dest_namespace:</span><span class="v">kube-system</span><span class="k">dest_port:</span><span class="v">53</span><span class="k">dest_port_num:</span><span class="v">53</span></div><div class="ln"><span class="k">dest_service_name:</span><span class="v">kube-dns</span><span class="k">dest_service_namespace:</span><span class="v">kube-system</span><span class="k">dest_service_port:</span><span class="v">dns</span></div></div>
<div class="r" style="left:586.5px;top:1244.8400000000001px;width:1909.50px;height:1.20px;background:#d5dbe6;"></div>
<svg class="r" style="left:600px;top:1263.34px" width="26" height="26" viewBox="0 0 26 26"><path d="M8.8 4.8 L16.3 12.7 L8.8 20.4" stroke="#343741" stroke-width="1.5" fill="none"/></svg>
<div class="t m" style="left:653px;top:1267.41px;font-size:21.58px;line-height:21.58px;color:#343741;">Apr 29, 2024 @ 15:56:34.000</div>
<div class="doc" style="left:1031.2px;top:1262.84px;height:204.05px;"><div class="ln"><span class="k">@timestamp:</span><span class="v">Apr 29, 2024 @ 15:56:44.000</span><span class="k">action:</span><span class="v">allow</span><span class="k">bytes_in:</span><span class="v">0</span><span class="k">bytes_out:</span><span class="v">5,280</span><span class="k">dest_ip:</span><span class="v">192.168.90.90</span></div><div class="ln"><span class="k">dest_labels:</span><span class="v">{ &quot;labels&quot;: [ &quot;k8s-app=kube-dns&quot;, &quot;kubernetes.azure.com/managedby=aks&quot;, &quot;kubernetes.io/cluster-</span></div><div class="ln"><span class="v">service=true&quot;, &quot;pod-template-hash=8cb684df4&quot;, &quot;version=v20&quot; ] }</span><span class="k">dest_name:</span><span class="v">coredns-8cb684df4-lt8z9</span></div><div class="ln"><span class="k">dest_name_aggr:</span><span class="v">coredns-8cb684df4-*</span><span class="k">dest_namespace:</span><span class="v">kube-system</span><span class="k">dest_port:</span><span class="v">53</span><span class="k">dest_port_num:</span><span class="v">53</span></div><div class="ln"><span class="k">dest_service_name:</span><span class="v">kube-dns</span><span class="k">dest_service_namespace:</span><span class="v">kube-system</span><span class="k">dest_service_port:</span><span class="v">dns</span></div></div>
<div class="r" style="left:586.5px;top:1488.91px;width:1909.50px;height:1.20px;background:#d5dbe6;"></div>
<svg class="r" style="left:600px;top:1507.41px" width="26" height="26" viewBox="0 0 26 26"><path d="M8.8 4.8 L16.3 12.7 L8.8 20.4" stroke="#343741" stroke-width="1.5" fill="none"/></svg>
<div class="t m" style="left:653px;top:1511.48px;font-size:21.58px;line-height:21.58px;color:#343741;">Apr 29, 2024 @ 15:56:34.000</div>
<div class="doc" style="left:1031.2px;top:1506.91px;height:204.05px;"><div class="ln"><span class="k">@timestamp:</span><span class="v">Apr 29, 2024 @ 15:56:44.000</span><span class="k">action:</span><span class="v">allow</span><span class="k">bytes_in:</span><span class="v">0</span><span class="k">bytes_out:</span><span class="v">320</span><span class="k">dest_ip:</span><span class="v">192.168.241.140</span></div><div class="ln"><span class="k">dest_labels:</span><span class="v">{ &quot;labels&quot;: [ &quot;pod-template-hash=8cb684df4&quot;, &quot;version=v20&quot;, &quot;k8s-app=kube-dns&quot;,</span></div><div class="ln"><span class="v">&quot;kubernetes.azure.com/managedby=aks&quot;, &quot;kubernetes.io/cluster-service=true&quot; ] }</span><span class="k">dest_name:</span><span class="v">coredns-8cb684df4-</span></div><div class="ln"></div><div class="ln"></div></div>
<div class="r" style="left:2478px;top:1625px;width:500px;height:200px;border-radius:12px;background:#fff;box-shadow:0 -1px 10px rgba(0,0,0,.10),0 -2px 22px rgba(0,0,0,.06);z-index:9;"></div></body></html>
